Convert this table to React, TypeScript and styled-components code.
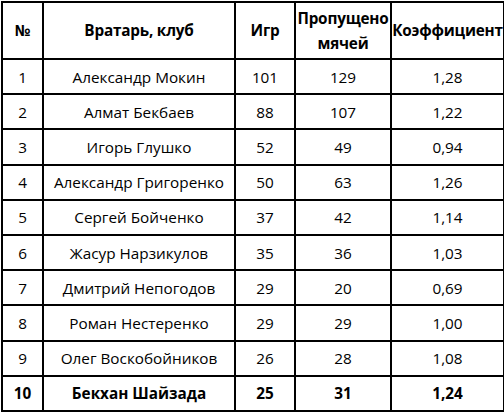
import React from "react";
import styled, { createGlobalStyle } from "styled-components";

const GlobalStyle = createGlobalStyle`
  html, body {
    margin: 0;
    padding: 0;
    background: #ffffff;
  }
  body {
    font-family: "Open Sans", "Liberation Sans", sans-serif;
    color: #000000;
  }
`;

type Keeper = {
  place: number;
  name: string;
  games: number;
  conceded: number;
  ratio: string;
};

const keepers: Keeper[] = [
  { place: 1, name: "Александр Мокин", games: 101, conceded: 129, ratio: "1,28" },
  { place: 2, name: "Алмат Бекбаев", games: 88, conceded: 107, ratio: "1,22" },
  { place: 3, name: "Игорь Глушко", games: 52, conceded: 49, ratio: "0,94" },
  { place: 4, name: "Александр Григоренко", games: 50, conceded: 63, ratio: "1,26" },
  { place: 5, name: "Сергей Бойченко", games: 37, conceded: 42, ratio: "1,14" },
  { place: 6, name: "Жасур Нарзикулов", games: 35, conceded: 36, ratio: "1,03" },
  { place: 7, name: "Дмитрий Непогодов", games: 29, conceded: 20, ratio: "0,69" },
  { place: 8, name: "Роман Нестеренко", games: 29, conceded: 29, ratio: "1,00" },
  { place: 9, name: "Олег Воскобойников", games: 26, conceded: 28, ratio: "1,08" },
  { place: 10, name: "Бекхан Шайзада", games: 25, conceded: 31, ratio: "1,24" },
];

const Wrapper = styled.div`
  width: 504px;
  height: 413px;
  padding: 1px 0 0 1px;
  box-sizing: border-box;
`;

const Table = styled.table`
  border-collapse: collapse;
  table-layout: fixed;
  width: 502px;
  font-size: 15.3px;
`;

const HeadCell = styled.th`
  height: 55px;
  border: 2px solid #000;
  font-weight: 700;
  text-align: center;
  vertical-align: middle;
  line-height: 25px;
  padding: 0;
  white-space: nowrap;
  letter-spacing: -0.2px;
`;

const Row = styled.tr<{ $bold?: boolean }>`
  height: 35.2px;
  font-weight: ${({ $bold }) => ($bold ? 700 : 400)};
`;

const Cell = styled.td`
  border: 2px solid #000;
  text-align: center;
  vertical-align: middle;
  padding: 0;
  white-space: nowrap;
`;

const App = () => {
  return (
    <Wrapper>
      <GlobalStyle />
      <Table>
        <colgroup>
          <col style={{ width: 41 }} />
          <col style={{ width: 192 }} />
          <col style={{ width: 60 }} />
          <col style={{ width: 96 }} />
          <col style={{ width: 113 }} />
        </colgroup>
        <thead>
          <tr>
            <HeadCell>№</HeadCell>
            <HeadCell>Вратарь, клуб</HeadCell>
            <HeadCell>Игр</HeadCell>
            <HeadCell>
              Пропущено
              <br />
              мячей
            </HeadCell>
            <HeadCell>Коэффициент</HeadCell>
          </tr>
        </thead>
        <tbody>
          {keepers.map((k) => (
            <Row key={k.place} $bold={k.place === 10}>
              <Cell>{k.place}</Cell>
              <Cell>{k.name}</Cell>
              <Cell>{k.games}</Cell>
              <Cell>{k.conceded}</Cell>
              <Cell>{k.ratio}</Cell>
            </Row>
          ))}
        </tbody>
      </Table>
    </Wrapper>
  );
};

export default App;
